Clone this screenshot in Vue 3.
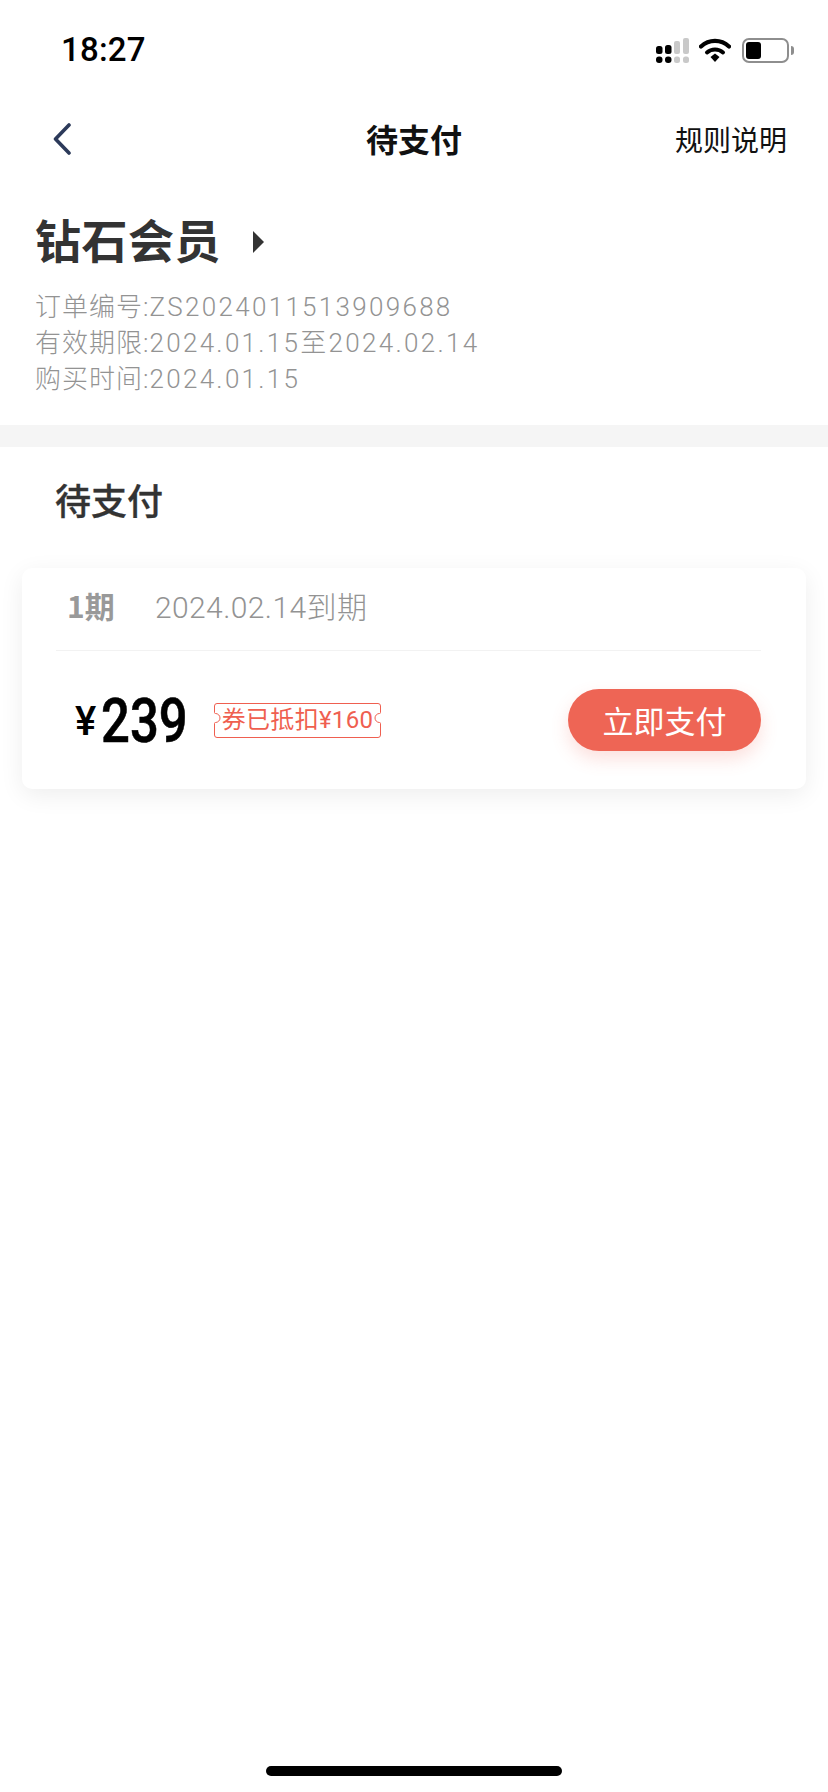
<script setup>
const info = [
  { label: '订单编号:', value: 'ZS2024011513909688' },
  { label: '有效期限:', value: '2024.01.15至2024.02.14' },
  { label: '购买时间:', value: '2024.01.15' }
]
</script>

<template>
  <div class="page">
    <div class="status-bar">
      <span class="time">18:27</span>
      <div class="status-icons">
        <svg class="signal" width="34" height="28" viewBox="0 0 34 28">
          <g fill="#000">
            <rect x="0" y="10" width="6.500" height="8" rx="2.500" />
            <rect x="9" y="9" width="6.500" height="9" rx="2.500" />
            <rect x="0" y="20.500" width="6.500" height="6.500" rx="3" />
            <rect x="9" y="20.500" width="6.500" height="6.500" rx="3" />
          </g>
          <g fill="#c9c9c9">
            <rect x="18" y="5" width="6" height="13" rx="2" />
            <rect x="27" y="2" width="6" height="16" rx="2" />
            <rect x="18" y="20.500" width="6" height="6.500" rx="2.500" />
            <rect x="27" y="20.500" width="6" height="6.500" rx="2.500" />
          </g>
        </svg>
        <svg class="wifi" width="32" height="26" viewBox="0 0 32 26">
          <path d="M2 9.500C10 2 22 2 30 9.500" fill="none" stroke="#000" stroke-width="4.200" stroke-linecap="round" />
          <path d="M8 15.500C12.500 11.500 19.500 11.500 24 15.500" fill="none" stroke="#000" stroke-width="4" stroke-linecap="round" />
          <path d="M11.500 20 16 16.500 20.500 20 16 25z" fill="#000" />
        </svg>
        <div class="battery">
          <div class="battery-body"><div class="battery-fill"></div></div>
          <div class="battery-nub"></div>
        </div>
      </div>
    </div>

    <div class="nav">
      <svg class="back" width="20" height="32" viewBox="0 0 20 32">
        <path d="M17 2 3.500 16 17 30" fill="none" stroke="#2c3a5a" stroke-width="3.600" stroke-linecap="round" stroke-linejoin="round" />
      </svg>
      <div class="nav-title">待支付</div>
      <div class="nav-rule">规则说明</div>
    </div>

    <div class="summary">
      <div class="member">
        <span class="member-name">钻石会员</span>
        <span class="member-arrow"></span>
      </div>
      <div class="info">
        <div v-for="line in info" :key="line.label" class="info-line">
          <span class="info-label">{{ line.label }}</span><span>{{ line.value }}</span>
        </div>
      </div>
    </div>

    <div class="band"></div>

    <div class="section-title">待支付</div>

    <div class="card">
      <div class="card-head">
        <span class="period">1期</span>
        <span class="due">2024.02.14到期</span>
      </div>
      <div class="card-body">
        <div class="price">
          <span class="yen">¥</span><span class="amount">239</span>
        </div>
        <div class="coupon">
          <svg class="coupon-border" width="167" height="35" viewBox="0 0 167 35">
            <path d="M3 .500H164a2.500 2.500 0 0 1 2.500 2.500V9.500a1 1 0 0 1-1 1a4 4 0 0 0 0 9a1 1 0 0 1 1 1V32a2.500 2.500 0 0 1-2.500 2.500H3A2.500 2.500 0 0 1 .5 32V20.500a1 1 0 0 1 1-1a4 4 0 0 0 0-9a1 1 0 0 1-1-1V3A2.500 2.500 0 0 1 3 .5z" fill="#fff" stroke="#ef5f50" stroke-width="1" />
          </svg>
          <span class="coupon-text">券已抵扣¥160</span>
        </div>
        <button class="pay">立即支付</button>
      </div>
    </div>

    <div class="home-bar"></div>
  </div>
</template>

<style>
html, body {
  margin: 0;
  background: #fff;
}
</style>

<style scoped>
.page {
  position: relative;
  width: 828px;
  height: 1792px;
  background: #fff;
  overflow: hidden;
  font-family: "Noto Sans CJK SC", "Noto Sans", sans-serif;
}

.status-bar {
  height: 100px;
  box-sizing: border-box;
  padding: 30px 34px 0 61px;
  display: flex;
  justify-content: space-between;
  align-items: flex-start;
}

.time {
  font-family: Roboto, sans-serif;
  font-size: 33px;
  font-weight: 500;
  line-height: 40px;
  color: #000;
  letter-spacing: 0.2px;
}

.status-icons {
  display: flex;
  align-items: center;
  gap: 11px;
  margin-top: 6px;
}

.signal {
  margin-right: -2px;
}

.battery {
  display: flex;
  align-items: center;
  gap: 2px;
}

.battery-body {
  width: 47px;
  height: 25px;
  box-sizing: border-box;
  border: 2px solid #8e8e8e;
  border-radius: 7px;
  padding: 2px;
}

.battery-fill {
  width: 15px;
  height: 100%;
  background: #000;
  border-radius: 3px;
}

.battery-nub {
  width: 3px;
  height: 9px;
  background: #8e8e8e;
  border-radius: 0 3px 3px 0;
}

.nav {
  height: 80px;
  box-sizing: border-box;
  padding: 0 41px 2px 52px;
  display: flex;
  align-items: center;
  justify-content: space-between;
  position: relative;
}

.back {
  flex: none;
}

.nav-title {
  position: absolute;
  left: 0;
  right: 0;
  top: -2px;
  line-height: 80px;
  text-align: center;
  font-size: 32px;
  font-weight: 700;
  color: #111;
  pointer-events: none;
}

.nav-rule {
  font-size: 28px;
  line-height: 40px;
  color: #111;
}

.summary {
  padding: 26px 0 0 35px;
  height: 245px;
  box-sizing: border-box;
}

.member {
  display: flex;
  align-items: center;
  height: 64px;
}

.member-name {
  font-size: 46px;
  font-weight: 700;
  letter-spacing: 0.5px;
  color: #333;
  line-height: 64px;
}

.member-arrow {
  margin-left: 32px;
  margin-top: 8px;
  width: 0;
  height: 0;
  border-left: 11px solid #333;
  border-top: 11px solid transparent;
  border-bottom: 11px solid transparent;
}

.info {
  margin-top: 19px;
}

.info-line {
  font-family: Roboto, "Noto Sans CJK SC", sans-serif;
  font-size: 26px;
  font-weight: 300;
  line-height: 36px;
  color: #939393;
  letter-spacing: 2.3px;
  white-space: nowrap;
}

.info-label {
  letter-spacing: 1px;
}

.band {
  height: 22px;
  background: #f5f5f5;
}

.section-title {
  padding-left: 55px;
  height: 121px;
  box-sizing: border-box;
  padding-top: 29px;
  font-size: 36px;
  line-height: 46px;
  font-weight: 500;
  -webkit-text-stroke: 0.3px #333;
  color: #333;
}

.card {
  margin: 0 22px;
  height: 221px;
  background: #fff;
  border-radius: 10px;
  box-shadow: 0 6px 24px rgba(0, 0, 0, 0.07);
  padding: 0 45px 0 34px;
  box-sizing: border-box;
}

.card-head {
  height: 83px;
  box-sizing: border-box;
  padding-left: 11px;
  padding-top: 15px;
  border-bottom: 1px solid #f2f2f2;
  display: flex;
  align-items: flex-start;
  color: #999;
  line-height: 44px;
}

.period {
  font-size: 30px;
  font-weight: 700;
  width: 88px;
}

.due {
  font-family: Roboto, "Noto Sans CJK SC", sans-serif;
  font-size: 30px;
  font-weight: 300;
  margin-top: 3px;
  color: #939393;
  letter-spacing: 0.4px;
}

.card-body {
  display: flex;
  align-items: center;
  height: 138px;
}

.price {
  margin-left: 19px;
  margin-top: 2px;
  display: flex;
  align-items: baseline;
  color: #000;
  font-family: Roboto, sans-serif;
  font-weight: 500;
  width: 139px;
}

.yen {
  font-size: 40px;
  position: relative;
  top: -7px;
}

.amount {
  display: inline-block;
  margin-left: 5px;
  font-size: 62px;
  line-height: 70px;
  -webkit-text-stroke: 0.6px #000;
  transform: scaleX(0.82);
  transform-origin: left center;
}

.coupon {
  position: relative;
  width: 167px;
  height: 35px;
  margin-top: 1px;
  display: flex;
  align-items: center;
  justify-content: center;
}

.coupon-border {
  position: absolute;
  left: 0;
  top: 0;
}

.coupon-text {
  position: relative;
  font-family: Roboto, "Noto Sans CJK SC", sans-serif;
  font-size: 24px;
  font-weight: 400;
  line-height: 35px;
  color: #ef5f50;
  white-space: nowrap;
  letter-spacing: 0.3px;
}

.pay {
  margin-left: auto;
  width: 193px;
  height: 62px;
  border: none;
  border-radius: 31px;
  background: #ee6555;
  color: #fff;
  font-family: inherit;
  font-size: 31px;
  font-weight: 400;
  line-height: 62px;
  padding: 0;
  box-shadow: 0 8px 18px rgba(238, 101, 85, 0.2);
}

.home-bar {
  position: absolute;
  left: 266px;
  bottom: 16px;
  width: 296px;
  height: 10px;
  border-radius: 5px;
  background: #000;
}
</style>
